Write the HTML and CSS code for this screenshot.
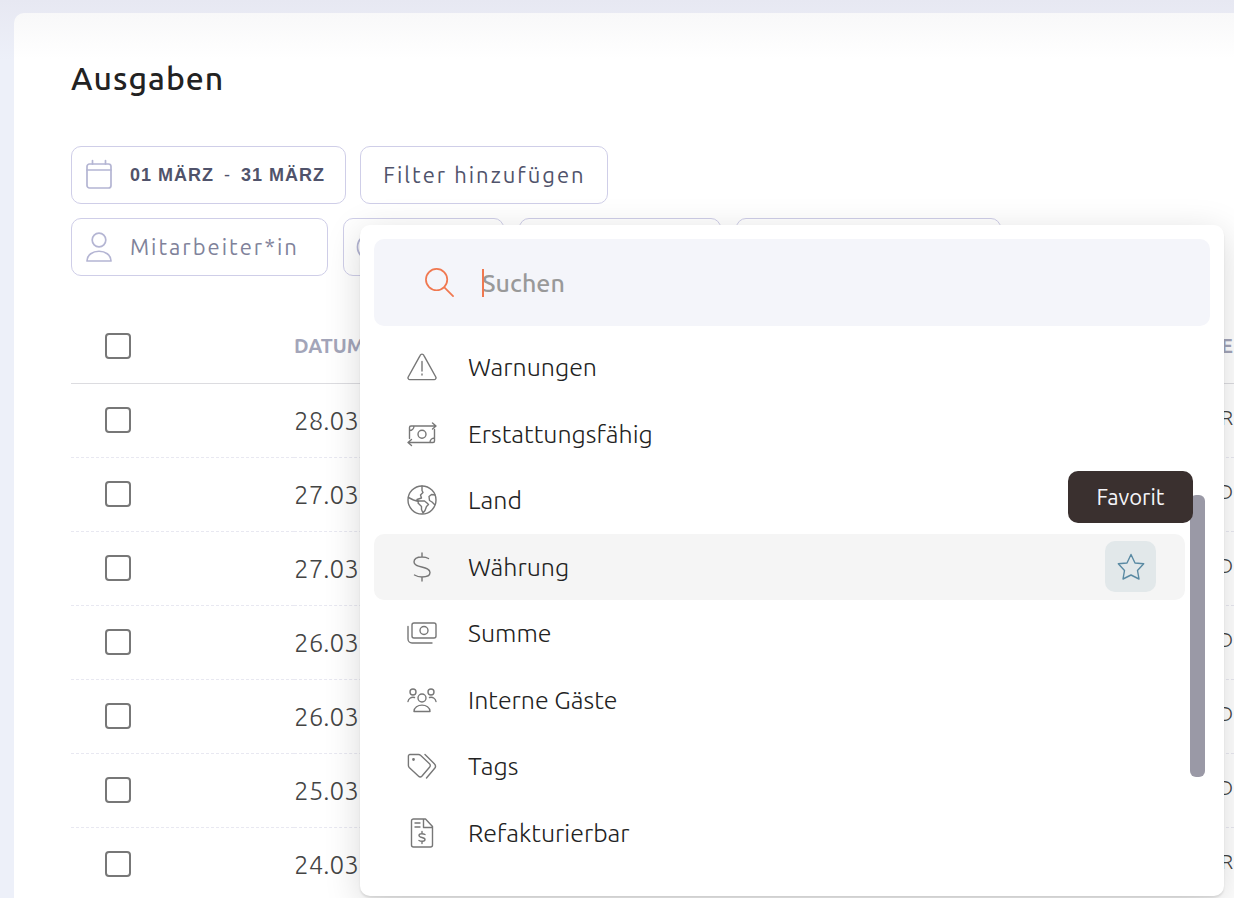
FILE: index.html
```
<!DOCTYPE html>
<html lang="de">
<head>
    <meta charset="UTF-8">
    <meta name="viewport" content="width=device-width, initial-scale=1.0">
    <title>Ausgaben</title>
    <link rel="stylesheet" href="styles.css">
</head>
<body>

<main class="panel">
    <h1 class="title">Ausgaben</h1>

    <div class="filters">
        <div class="filter-row filter-row-main">
            <button type="button" class="chip chip-date">
                <svg class="chip-icon" viewBox="0 0 28 32"><rect x="2" y="5" width="24" height="24" rx="2.5"/><path d="M2 11h24M7.500 1.500v3.500M20.500 1.500v3.500"/></svg>
                <span>01 MÄRZ</span><span class="dash">-</span><span>31 MÄRZ</span>
            </button>
            <div class="dropdown">
                <button type="button" class="chip chip-add">Filter hinzufügen</button>

                <div class="menu">
                    <div class="search">
                        <svg class="search-icon" viewBox="0 0 32 32"><circle cx="13" cy="13" r="11"/><path d="M21 21l9 9"/></svg>
                        <div class="search-field">
                            <input type="text" class="search-input" placeholder="Suchen" aria-label="Suchen">
                            <span class="caret"></span>
                        </div>
                    </div>

                    <ul class="options">
                        <li class="option">
                            <svg class="option-icon" viewBox="0 0 30 30"><path d="M13.200 3.300a2 2 0 0 1 3.600 0L28.800 25a1.800 1.800 0 0 1-1.600 2.600H2.800A1.800 1.800 0 0 1 1.200 25zM15 9.500v9.500M15 22v1"/></svg>
                            <span>Warnungen</span>
                        </li>
                        <li class="option">
                            <svg class="option-icon" viewBox="0 0 30 30"><path d="M28.500 7H4a1.500 1.500 0 0 0-1.500 1.500v11M25.500 4l3.500 3-3.500 3M1.500 23.500H26a1.500 1.500 0 0 0 1.500-1.500V10.500M4.500 20.500l-3.500 3 3.500 3M2.500 11.500A4.500 4.500 0 0 0 7 7M27.500 19a4.500 4.500 0 0 0-4.500 4.500"/><circle cx="15" cy="15.300" r="4"/></svg>
                            <span>Erstattungsfähig</span>
                        </li>
                        <li class="option">
                            <svg class="option-icon" viewBox="0 0 30 30"><circle cx="15" cy="15" r="14"/><path d="M15 1v4.500l1 2-2.500 2.500 1 3-4.500 1.500 1.500 1.500h6l2.500 2 1.500 1.500-2 2-1.500 4-2 2.500-1.500-3.500v-3l-3.500-3.500.5-1.500-5-1.500L1.500 12.500M28 10l-3.500-.5-2.500 2 .5 4 2.500 1.500 2.500 2.500"/></svg>
                            <span>Land</span>
                        </li>
                        <li class="option option-active">
                            <svg class="option-icon" viewBox="0 0 30 30"><path d="M15 1v4M15 25v4M21.500 6.500c-2-1.300-4.500-1.500-6.500-1.500-4.500 0-8 1.500-8 5 0 6.500 16 3.500 16 10.500 0 3.500-3.500 4.500-8 4.500-2.500 0-5-.5-7.500-2"/></svg>
                            <span>Währung</span>
                            <button type="button" class="favorite" aria-label="Favorit">
                                <svg class="star" viewBox="0 0 28 28"><path d="M14 1.500l4 8.500 8.700.8-6.200 6.700L22 26l-8-4-8 4 1.500-8.500L1.300 10.800 10 10z"/></svg>
                                <span class="tooltip">Favorit</span>
                            </button>
                        </li>
                        <li class="option">
                            <svg class="option-icon" viewBox="0 0 30 30"><rect x="5" y="5" width="24" height="15" rx="2"/><circle cx="17" cy="12.500" r="4"/><path d="M1 8.500V21a4 4 0 0 0 4 4h20"/></svg>
                            <span>Summe</span>
                        </li>
                        <li class="option">
                            <svg class="option-icon" viewBox="0 0 30 30"><circle cx="6" cy="7" r="3"/><circle cx="24" cy="7" r="3"/><circle cx="15" cy="13" r="4"/><path d="M1 16.500a5 5 0 0 1 6.500-4M29 16.500a5 5 0 0 0-6.500-4M7 26.500c0-8.500 16-8.500 16 0z"/></svg>
                            <span>Interne Gäste</span>
                        </li>
                        <li class="option">
                            <svg class="option-icon" viewBox="0 0 30 30"><path d="M3 3.500h8.500a3 3 0 0 1 2 .8l9 8.400a2.500 2.500 0 0 1 0 3.600l-7.700 9a2.200 2.200 0 0 1-3.200 0L2.200 16.500a3 3 0 0 1-.8-2V5A1.500 1.500 0 0 1 3 3.500zM18 3.500l9.300 9.200a3.500 3.500 0 0 1 .2 4.800L19.500 27"/><circle cx="6.500" cy="8.500" r=".7"/></svg>
                            <span>Tags</span>
                        </li>
                        <li class="option">
                            <svg class="option-icon" viewBox="0 0 30 30"><path d="M6.500 1h12l7 7.500V27a2 2 0 0 1-2 2h-17a2 2 0 0 1-2-2V3a2 2 0 0 1 2-2zM16.500 1v8.500h9M8 5h5M8 9h5M15 13.500v2M15 23.500v2M18 16.500c-1.500-1-6-1.500-6 1s6 1.500 6 4-4.500 2-6 1"/></svg>
                            <span>Refakturierbar</span>
                        </li>
                    </ul>
                    <div class="scrollbar"></div>
                </div>
            </div>
        </div>

        <div class="filter-row">
            <button type="button" class="chip chip-employee">
                <svg class="chip-icon" viewBox="0 0 28 32"><circle cx="14" cy="9" r="6.800"/><path d="M2 30c0-13 24-13 24 0z"/></svg>
                <span>Mitarbeiter*in</span>
            </button>
            <button type="button" class="chip chip-small" aria-label="Filter">
                <svg class="chip-icon" viewBox="0 0 28 32"><circle cx="14" cy="16" r="12.500"/></svg>
            </button>
            <button type="button" class="chip chip-medium" aria-label="Filter"></button>
            <button type="button" class="chip chip-large" aria-label="Filter"></button>
        </div>
    </div>

    <table class="expenses">
        <thead>
            <tr><th class="col-check"><input type="checkbox" aria-label="Alle auswählen"></th><th>DATUM</th><th class="col-end">E</th></tr>
        </thead>
        <tbody>
            <tr><td class="col-check"><input type="checkbox" aria-label="Auswählen"></td><td>28.03</td><td class="col-end">R</td></tr>
            <tr><td class="col-check"><input type="checkbox" aria-label="Auswählen"></td><td>27.03</td><td class="col-end">D</td></tr>
            <tr><td class="col-check"><input type="checkbox" aria-label="Auswählen"></td><td>27.03</td><td class="col-end">D</td></tr>
            <tr><td class="col-check"><input type="checkbox" aria-label="Auswählen"></td><td>26.03</td><td class="col-end">D</td></tr>
            <tr><td class="col-check"><input type="checkbox" aria-label="Auswählen"></td><td>26.03</td><td class="col-end">D</td></tr>
            <tr><td class="col-check"><input type="checkbox" aria-label="Auswählen"></td><td>25.03</td><td class="col-end">D</td></tr>
            <tr><td class="col-check"><input type="checkbox" aria-label="Auswählen"></td><td>24.03</td><td class="col-end">R</td></tr>
        </tbody>
    </table>
</main>

</body>
</html>
```
FILE: styles.css
```
* {
    margin: 0;
    padding: 0;
    box-sizing: border-box;
}

body {
    font-family: Ubuntu, "Noto Sans", sans-serif;
    background: linear-gradient(#e7e8f2 0, #edf0f9 60px);
    height: 100vh;
    overflow: hidden;
    padding: 13px 0 0 14px;
}

svg {
    fill: none;
    stroke: currentColor;
    stroke-width: 1.4;
    stroke-linecap: round;
    stroke-linejoin: round;
    flex-shrink: 0;
}

button {
    font-family: inherit;
    cursor: pointer;
}

.panel {
    min-height: 100%;
    padding: 43px 0 0 57px;
    border-radius: 10px 0 0 0;
    background: linear-gradient(#f8f8f9 0, #fff 46px);
}

.title {
    font-size: 32px;
    line-height: 44px;
    font-weight: 500;
    letter-spacing: 1px;
    color: #222;
}

.filters {
    display: flex;
    flex-direction: column;
    gap: 14px;
    margin-top: 46px;
}

.filter-row {
    display: flex;
    gap: 15px;
}

.filter-row-main {
    gap: 14px;
}

.chip {
    display: flex;
    align-items: center;
    height: 58px;
    padding: 0 12px 1px 13px;
    border: 1px solid #cfcee8;
    border-radius: 10px;
    background: transparent;
    font-size: 22px;
    letter-spacing: 2px;
    color: #80829a;
}

.chip-icon {
    width: 28px;
    height: 32px;
    margin-right: 17px;
    color: #b4b5d3;
    stroke-width: 1.7;
}

.chip-date {
    width: 275px;
    padding-bottom: 0;
    font-family: "Liberation Sans", Arial, sans-serif;
    font-size: 18px;
    font-weight: bold;
    letter-spacing: 1px;
    color: #50536b;
}

.dash {
    margin: 0 10px;
    font-weight: normal;
}

.chip-add {
    width: 248px;
    justify-content: center;
    color: #50536b;
}

.chip-employee {
    width: 257px;
}

.chip-small {
    width: 161px;
    padding-left: 12px;
}

.chip-medium {
    width: 202px;
}

.chip-large {
    width: 265px;
}

.dropdown {
    position: relative;
}

.menu {
    position: absolute;
    top: calc(100% + 21px);
    left: 0;
    z-index: 10;
    width: 864px;
    padding: 14px 14px 30px;
    border-radius: 10px;
    background: #fff;
    box-shadow: 0 2px 2px rgba(0, 0, 0, 0.1), 0 8px 36px rgba(0, 0, 0, 0.15);
}

.search {
    display: flex;
    align-items: center;
    gap: 27px;
    height: 87px;
    padding: 0 50px;
    border-radius: 10px;
    background: #f4f5fa;
}

.search-icon {
    width: 31px;
    height: 31px;
    color: #f07850;
    stroke-width: 1.8;
}

.search-field {
    position: relative;
    flex: 1;
}

.search-input {
    width: 100%;
    border: none;
    outline: none;
    background: transparent;
    font-family: inherit;
    font-size: 25px;
    line-height: 32px;
    font-weight: 500;
    color: #222;
}

.search-input::placeholder {
    color: #999;
}

.caret {
    position: absolute;
    top: 2px;
    left: 0;
    width: 2px;
    height: 28px;
    background: #f07850;
}

.options {
    display: grid;
    grid-template-rows: repeat(8, 1fr);
    height: 532px;
    margin: 8px 25px 0 0;
    list-style: none;
}

.option {
    display: flex;
    align-items: center;
    padding: 0 29px 0 33px;
    border-radius: 10px;
    font-size: 25px;
    line-height: 32px;
    font-weight: 300;
    color: #222;
}

.option-active {
    background: #f5f5f5;
}

.option-icon {
    width: 30px;
    height: 30px;
    margin-right: 31px;
    color: #777;
}

.favorite {
    position: relative;
    display: flex;
    align-items: center;
    justify-content: center;
    width: 51px;
    height: 51px;
    margin-left: auto;
    border: none;
    border-radius: 10px;
    background: #e2e8ea;
}

.star {
    width: 28px;
    height: 28px;
    color: #5a8aa3;
}

.tooltip {
    position: absolute;
    bottom: calc(100% + 18px);
    right: -37px;
    z-index: 2;
    width: 125px;
    border-radius: 10px;
    background: #3a302f;
    font-size: 22px;
    line-height: 52px;
    color: #f4f4f8;
}

.scrollbar {
    position: absolute;
    top: 270px;
    right: 19px;
    width: 15px;
    height: 282px;
    border-radius: 6px;
    background: #9a99a6;
}

.expenses {
    width: 100%;
    margin-top: 33px;
    border-collapse: collapse;
    text-align: left;
}

.expenses th {
    height: 74px;
    border-bottom: 1px solid #dcdce0;
    font-size: 20px;
    font-weight: 700;
    color: #a3a5b9;
}

.expenses td {
    height: 74px;
    border-bottom: 1px dashed #e8e8f1;
    font-size: 26px;
    font-weight: 300;
    color: #444;
}

.expenses .col-check {
    width: 223px;
    padding-left: 34px;
}

.expenses .col-end {
    padding-right: 1px;
    text-align: right;
}

.expenses td.col-end {
    padding-bottom: 6px;
    font-size: 20px;
}

input[type="checkbox"] {
    display: block;
    appearance: none;
    width: 26px;
    height: 26px;
    border: 2px solid #777;
    border-radius: 4px;
    background: #fff;
}
```
